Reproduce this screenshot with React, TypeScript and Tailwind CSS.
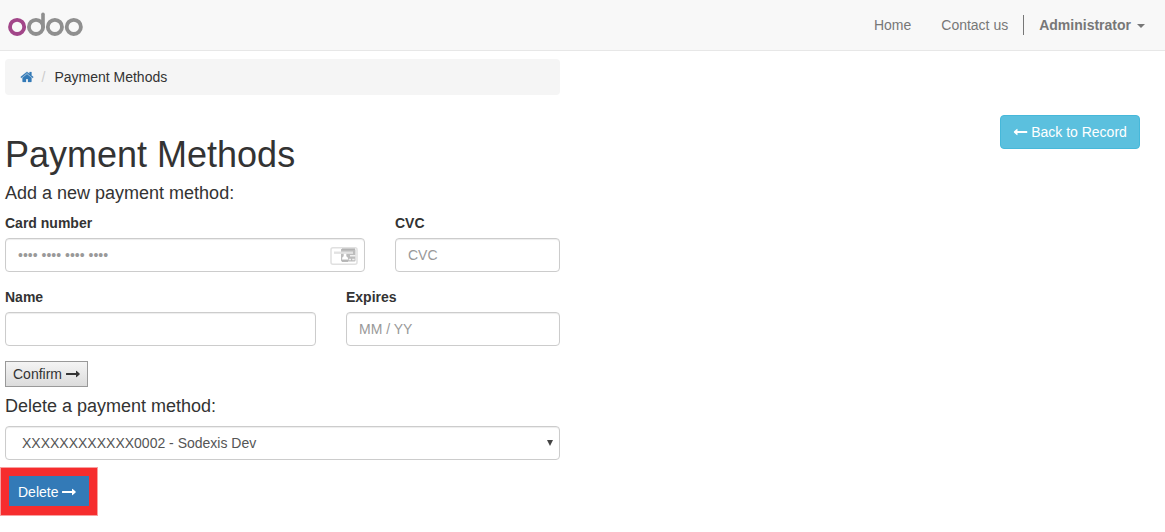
import React from "react";

const RIGHT = "M.5 6H10V4.2Q10 3.4 10.7 4L13.6 6.6Q14 7 13.6 7.4L10.7 10Q10 10.6 10 9.8V8H.5Q0 8 0 7.5v-1Q0 6 .5 6z";
const LEFT = "M13.5 6H4V4.2Q4 3.4 3.3 4L.4 6.6Q0 7 .4 7.4L3.3 10Q4 10.6 4 9.8V8h9.5q.5 0 .5-.5v-1q0-.5-.5-.5z";
const HOME =
  "M1472 992v480q0 26-19 45t-45 19h-384v-384h-256v384h-384q-26 0-45-19t-19-45v-480q0-1 .5-3t.5-3l575-474 575 474q1 2 1 6zm223-69l-62 74q-8 9-21 11h-3q-13 0-21-7l-692-577-692 577q-12 8-24 7-13-2-21-11l-62-74q-8-10-7-23.5t11-21.5l719-599q32-26 76-26t76 26l244 204v-195q0-14 9-23t23-9h192q14 0 23 9t9 23v408l219 182q10 8 11 21.5t-7 23.5z";

function Arrow({ d, className = "" }: { d: string; className?: string }) {
  return (
    <svg viewBox="0 0 14 14" className={`h-3.5 w-3.5 shrink-0 fill-current ${className}`} aria-hidden="true">
      <path d={d} />
    </svg>
  );
}

function Home() {
  return (
    <svg viewBox="0 0 1792 1792" className="-ml-[0.5px] h-3.5 w-3.5 shrink-0 fill-[#337ab7] stroke-[#337ab7]" strokeWidth="30" aria-hidden="true">
      <path d={HOME} />
    </svg>
  );
}

function Logo() {
  return (
    <svg width="76" height="26" viewBox="0 0 76 26" fill="none" strokeWidth="3.8" role="img" aria-label="odoo">
      <circle cx="9.1" cy="15.9" r="7.1" stroke="#a24689" />
      <g stroke="#8f8f8f">
        <circle cx="28" cy="15.9" r="7.1" />
        <path d="M35 15.9V3.2" strokeLinecap="round" strokeWidth="3.6" />
        <circle cx="46.9" cy="15.9" r="7.1" />
        <circle cx="65.8" cy="15.9" r="7.1" />
      </g>
    </svg>
  );
}

function CardIcon() {
  return (
    <svg width="28" height="20" viewBox="0 0 28 20" fill="none" aria-hidden="true">
      <rect x="1" y="1.75" width="26" height="16.5" rx="2" stroke="#e0e0e0" strokeWidth="1.5" />
      <path d="M11 3h13.5q1 0 1 1v10.5q0 1-1 1H12q-1 0-1-1z" fill="#bcbcbc" />
      <path d="M12 3h13M12 15.2h6" stroke="#a8a8a8" />
      <path d="M4 5.5h19v2.4H4z" fill="#e2e2e2" />
      <path d="M12 13.5q0-2.7 1.7-3.3V7.8h2.6v2.4q1.9.8 1.9 3.3z" fill="#fff" />
      <path d="M20 9.7h5.5M18.8 13.4h2.2m1.2 0h2.4" stroke="#f0f0f0" strokeWidth="1.5" />
    </svg>
  );
}

const field =
  "block h-[34px] w-full rounded-[4px] border border-[#ccc] bg-white px-3 py-1.5 text-[14px] leading-5 text-[#555] shadow-[inset_0_1px_1px_rgba(0,0,0,0.075)] outline-none placeholder:text-[#999]";

function Field({ label, placeholder, className, icon }: { label: string; placeholder?: string; className: string; icon?: React.ReactNode }) {
  return (
    <label className={`block ${className}`}>
      <span className="mb-[5px] block font-bold">{label}</span>
      <span className="relative block">
        <input className={field} placeholder={placeholder} />
        {icon && <span className="absolute top-[8px] right-[7px]">{icon}</span>}
      </span>
    </label>
  );
}

export default function App() {
  return (
    <div className="min-h-[532px] bg-white font-['Liberation_Sans',Arial,sans-serif] text-[14px] leading-5 text-[#333]">
      <header className="flex h-[51px] items-start justify-between border-b border-[#e7e7e7] bg-[#f8f8f8] pr-5 pl-2">
        <div className="pt-[11px]">
          <Logo />
        </div>
        <nav className="flex items-center pt-[15px] text-[#777]">
          <a>Home</a>
          <a className="ml-[30px]">Contact us</a>
          <span className="ml-[15px] h-5 w-px bg-[#777]" />
          <a className="ml-[15px] flex items-center font-bold">
            Administrator
            <span className="mt-px ml-1.5 border-x-4 border-t-4 border-x-transparent border-t-[#777]" />
          </a>
        </nav>
      </header>

      <div className="flex items-start justify-between pt-2 pr-[25px] pl-[5px]">
        <main className="w-[555px]">
          <div className="flex h-9 items-center rounded-[4px] bg-[#f5f5f5] px-[15px]">
            <Home />
            <span className="ml-[8px] text-[#ccc]">/</span>
            <span className="ml-[9px]">Payment Methods</span>
          </div>

          <h1 className="mt-10 text-[36px] leading-[39.6px]">Payment Methods</h1>
          <h4 className="mt-[8.4px] text-[18px] leading-5">Add a new payment method:</h4>

          <div className="mt-[10px] flex gap-[30px]">
            <Field label="Card number" placeholder="•••• •••• •••• ••••" className="w-[360px]" icon={<CardIcon />} />
            <Field label="CVC" placeholder="CVC" className="w-[165px]" />
          </div>
          <div className="mt-[15px] flex gap-[30px]">
            <Field label="Name" className="w-[311px]" />
            <Field label="Expires" placeholder="MM / YY" className="w-[214px]" />
          </div>

          <button className="mt-[15px] flex h-[26px] w-[83px] items-center justify-center gap-1 border border-[#999] bg-linear-to-b from-[#f4f4f4] to-[#dcdcdc] whitespace-nowrap">
            Confirm <Arrow d={RIGHT} />
          </button>

          <h4 className="mt-[9px] text-[18px] leading-5">Delete a payment method:</h4>
          <div className="mt-[10px] flex h-[34px] items-center justify-between rounded-[4px] border border-[#ccc] pr-[6px] pl-4 text-[#555] shadow-[inset_0_1px_1px_rgba(0,0,0,0.075)]">
            <span>XXXXXXXXXXXX0002 - Sodexis Dev</span>
            <svg width="6" height="6" viewBox="0 0 6 6" aria-hidden="true">
              <path d="M0 0h6L3 6z" fill="#444" />
            </svg>
          </div>

          <div className="mt-[7px] -ml-[5px] flex h-[49px] w-[98px] items-center border border-[#f8a0a0] bg-[#f62d2e] pl-2">
            <button className="flex h-[30px] w-[80px] items-center gap-1 bg-[#337ab7] pt-px pl-[9px] text-white">
              Delete <Arrow d={RIGHT} />
            </button>
          </div>
        </main>

        <button className="mt-14 flex h-[34px] w-[140px] items-center justify-center gap-1 rounded-[4px] border border-[#46b8da] bg-[#5bc0de] whitespace-nowrap text-white">
          <Arrow d={LEFT} className="translate-x-[0.5px]" /> Back to Record
        </button>
      </div>
    </div>
  );
}
